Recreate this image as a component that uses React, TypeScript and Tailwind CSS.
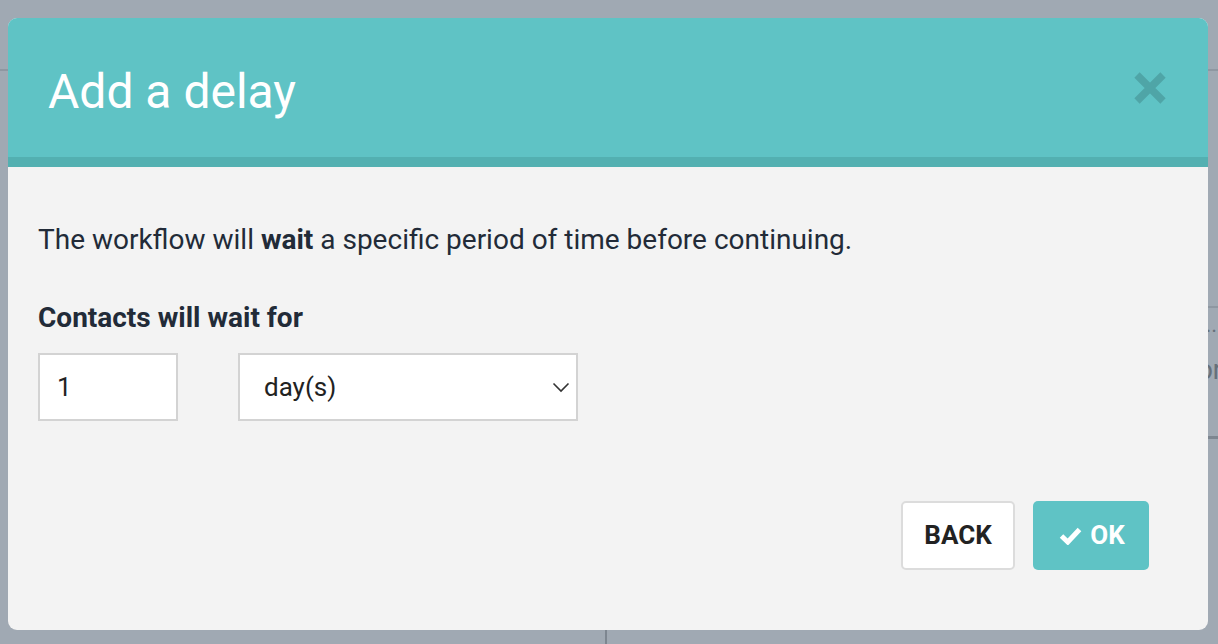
import React from "react";

const CloseIcon = () => (
  <svg width="36" height="36" viewBox="0 0 36 36" fill="none">
    <path d="M5 5 L31 31 M31 5 L5 31" stroke="#4fa5a7" strokeWidth="7.5" strokeLinecap="butt" />
  </svg>
);

const CheckIcon = () => (
  <svg width="23" height="19" viewBox="0 0 23 19" fill="none">
    <path d="M2.5 10 L8.8 16 L20.5 3.5" stroke="white" strokeWidth="5" strokeLinejoin="miter" />
  </svg>
);

const Chevron = () => (
  <svg width="18" height="11" viewBox="0 0 18 11" fill="none">
    <path d="M1.5 1.5 L9 9 L16.5 1.5" stroke="#333" strokeWidth="1.6" />
  </svg>
);

const App = () => {
  return (
    <div
      className="relative w-[1218px] h-[644px] overflow-hidden bg-[#a0a9b3]"
      style={{ fontFamily: "Roboto, 'Liberation Sans', sans-serif" }}
    >
      {/* page behind the overlay */}
      <div className="h-[71px] border-b-2 border-[#8e97a1]" />
      <div className="flex h-[573px]">
        <div className="w-[605px] shrink-0" />
        <div className="flex-1 border-l-2 border-[#7d8690] flex flex-col items-end">
          <div className="w-[120px] h-[235px]" />
          <div className="w-[120px] border-t-2 border-[#8e97a1]" />
          <div className="w-[120px] h-[34px] text-[22px] leading-[34px] text-[#66707a] text-right pr-[1px]">
            ...
          </div>
          <div className="w-[120px] h-[56px] text-[27px] leading-[56px] text-[#66707a] text-right -mr-[4px]">
            or
          </div>
          <div className="w-[120px] h-[38px]" />
          <div className="w-[120px] border-t-[3px] border-[#7d8690]" />
        </div>
      </div>

      {/* modal */}
      <div className="absolute left-[8px] top-[18px] w-[1200px] h-[612px] rounded-[9px] overflow-hidden bg-[#f3f3f3] flex flex-col">
        <div className="h-[139px] bg-[#5fc3c5] flex items-center justify-between pl-[40px] pr-[40px]">
          <h1 className="text-[48px] text-white font-normal leading-none pt-[8px]">Add a delay</h1>
          <CloseIcon />
        </div>
        <div className="h-[10px] bg-[#53b0b1]" />

        <div className="flex-1 flex flex-col px-[30px] pt-[57px]">
          <p className="text-[28px] text-[#222b38] leading-[32px]">
            The workflow will <span className="font-bold">wait</span> a specific period of time before continuing.
          </p>

          <label className="mt-[46px] text-[28px] font-bold text-[#222b38] leading-[32px]">
            Contacts will wait for
          </label>

          <div className="mt-[19px] flex items-center gap-[60px]">
            <div className="w-[140px] h-[68px] bg-white border-2 border-[#d3d3d3] flex items-center pl-[17px] text-[26px] text-[#222]">
              1
            </div>
            <div className="w-[340px] h-[68px] bg-white border-2 border-[#d3d3d3] flex items-center justify-between pl-[24px] pr-[6px] text-[26px] text-[#222]">
              <span>day(s)</span>
              <Chevron />
            </div>
          </div>

          <div className="mt-[80px] flex justify-end gap-[18px] pr-[29px]">
            <button className="w-[114px] h-[69px] bg-white border-2 border-[#dcdcdc] rounded-[5px] text-[26px] font-bold text-[#222]">
              BACK
            </button>
            <button className="w-[116px] h-[69px] bg-[#5fc3c5] rounded-[5px] text-[26px] font-bold text-white flex items-center justify-center gap-[8px] pl-[2px]">
              <CheckIcon />
              OK
            </button>
          </div>
        </div>
      </div>
    </div>
  );
};

export default App;
